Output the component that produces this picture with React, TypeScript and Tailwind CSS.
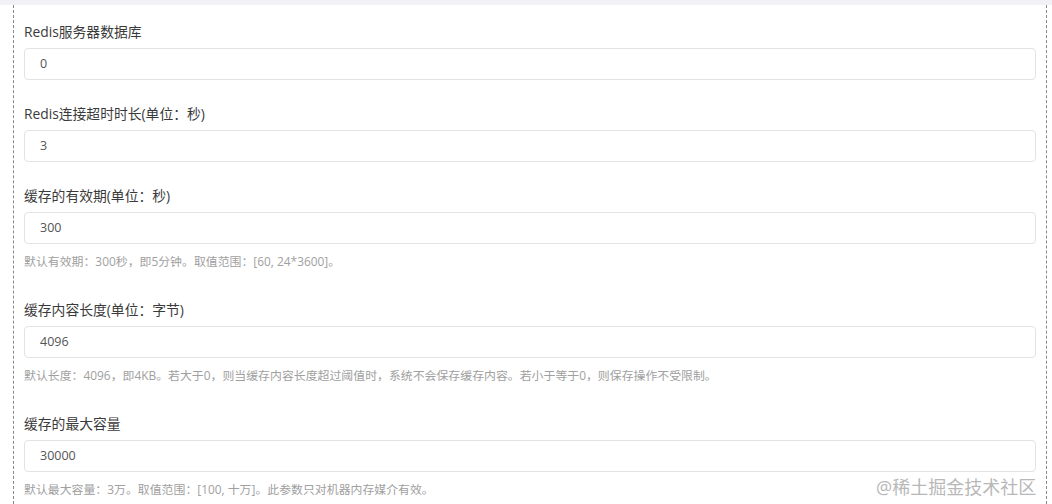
import React from 'react';

type Field = {
  label: string;
  value: string;
  help?: string;
};

const fields: Field[] = [
  { label: 'Redis服务器数据库', value: '0' },
  { label: 'Redis连接超时时长(单位：秒)', value: '3' },
  {
    label: '缓存的有效期(单位：秒)',
    value: '300',
    help: '默认有效期：300秒，即5分钟。取值范围：[60, 24*3600]。',
  },
  {
    label: '缓存内容长度(单位：字节)',
    value: '4096',
    help: '默认长度：4096，即4KB。若大于0，则当缓存内容长度超过阈值时，系统不会保存缓存内容。若小于等于0，则保存操作不受限制。',
  },
  {
    label: '缓存的最大容量',
    value: '30000',
    help: '默认最大容量：3万。取值范围：[100, 十万]。此参数只对机器内存媒介有效。',
  },
];

const font = { fontFamily: '"Open Sans", "Noto Sans CJK SC", sans-serif' };

export default function App() {
  return (
    <div className="relative w-[1052px] h-[504px] overflow-hidden bg-white" style={font}>
      {/* top band */}
      <div className="h-[5px] bg-[#f1f1f6]" />

      <div className="ml-[13px] w-[1034px] h-[499px] border-x border-dashed border-[#888] px-[10px] pt-[17px]">
        {fields.map((f, i) => (
          <div key={i} className={f.help ? 'mb-[30px]' : 'mb-[24px]'}>
            <label className="block h-[20px] leading-[20px] text-[13.8px] text-[#3a3a3a] mb-[6px]">
              {f.label}
            </label>
            <div className="h-[32px] w-full rounded-[4px] border border-[#e3e3e3] bg-white pl-[15px] flex items-center text-[12.5px] text-[#555]">
              {f.value}
            </div>
            {f.help && (
              <p className="mt-[8px] h-[18px] leading-[18px] text-[11.9px] text-[#a0a0a0]">{f.help}</p>
            )}
          </div>
        ))}
      </div>

      {/* watermark */}
      <div
        className="absolute left-[876px] top-[476px] text-[18px] leading-[22px] text-[#b8b8b8]"
        style={{ textShadow: '0 0 1px #fff' }}
      >
        @稀土掘金技术社区
      </div>
    </div>
  );
}
